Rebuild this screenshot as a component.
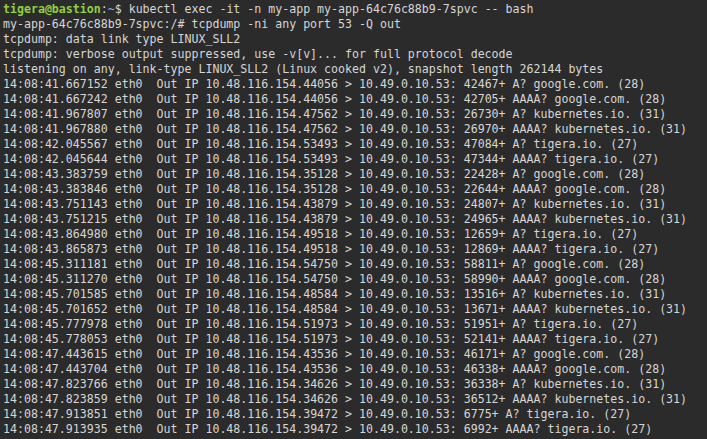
const rows: [string, string, string][] = [
  ["14:08:41.667152", "44056", "42467+ A? google.com. (28)"],
  ["14:08:41.667242", "44056", "42705+ AAAA? google.com. (28)"],
  ["14:08:41.967807", "47562", "26730+ A? kubernetes.io. (31)"],
  ["14:08:41.967880", "47562", "26970+ AAAA? kubernetes.io. (31)"],
  ["14:08:42.045567", "53493", "47084+ A? tigera.io. (27)"],
  ["14:08:42.045644", "53493", "47344+ AAAA? tigera.io. (27)"],
  ["14:08:43.383759", "35128", "22428+ A? google.com. (28)"],
  ["14:08:43.383846", "35128", "22644+ AAAA? google.com. (28)"],
  ["14:08:43.751143", "43879", "24807+ A? kubernetes.io. (31)"],
  ["14:08:43.751215", "43879", "24965+ AAAA? kubernetes.io. (31)"],
  ["14:08:43.864980", "49518", "12659+ A? tigera.io. (27)"],
  ["14:08:43.865873", "49518", "12869+ AAAA? tigera.io. (27)"],
  ["14:08:45.311181", "54750", "58811+ A? google.com. (28)"],
  ["14:08:45.311270", "54750", "58990+ AAAA? google.com. (28)"],
  ["14:08:45.701585", "48584", "13516+ A? kubernetes.io. (31)"],
  ["14:08:45.701652", "48584", "13671+ AAAA? kubernetes.io. (31)"],
  ["14:08:45.777978", "51973", "51951+ A? tigera.io. (27)"],
  ["14:08:45.778053", "51973", "52141+ AAAA? tigera.io. (27)"],
  ["14:08:47.443615", "43536", "46171+ A? google.com. (28)"],
  ["14:08:47.443704", "43536", "46338+ AAAA? google.com. (28)"],
  ["14:08:47.823766", "34626", "36338+ A? kubernetes.io. (31)"],
  ["14:08:47.823859", "34626", "36512+ AAAA? kubernetes.io. (31)"],
  ["14:08:47.913851", "39472", "6775+ A? tigera.io. (27)"],
  ["14:08:47.913935", "39472", "6992+ AAAA? tigera.io. (27)"],
];

export default function App() {
  return (
    <div className="h-[439px] w-[707px] overflow-hidden bg-[#2b2b2b] pl-[3px] pt-[2px] font-['DejaVu_Sans_Mono',monospace] text-[11.6px] leading-[15px] text-[#d6d6d6] whitespace-pre">
      <div>
        <span className="font-bold text-[#8fd13e]">tigera@bastion</span>
        <span>:</span>
        <span className="font-bold text-[#6f9fd8]">~</span>
        <span>$ kubectl exec -it -n my-app my-app-64c76c88b9-7spvc -- bash</span>
      </div>
      <div>my-app-64c76c88b9-7spvc:/# tcpdump -ni any port 53 -Q out</div>
      <div>tcpdump: data link type LINUX_SLL2</div>
      <div>tcpdump: verbose output suppressed, use -v[v]... for full protocol decode</div>
      <div>listening on any, link-type LINUX_SLL2 (Linux cooked v2), snapshot length 262144 bytes</div>
      {rows.map(([time, port, query]) => (
        <div key={time}>
          {time} eth0  Out IP 10.48.116.154.{port} &gt; 10.49.0.10.53: {query}
        </div>
      ))}
    </div>
  );
}
